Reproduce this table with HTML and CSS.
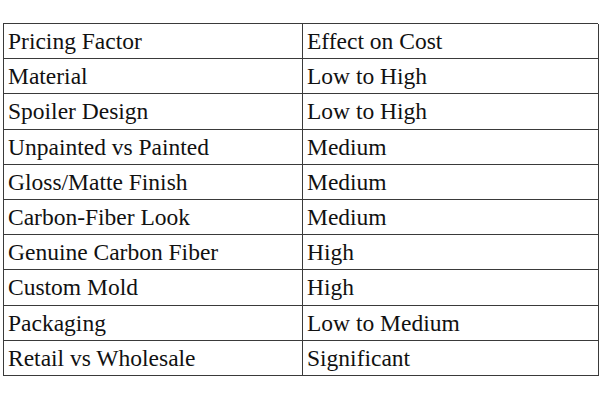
FILE: index.html
```html
<!DOCTYPE html>
<html>
<head>
<meta charset="utf-8">
<link rel="stylesheet" href="styles.css">
</head>
<body>
<div class="pricing">
  <p class="cell">Pricing Factor</p><p class="cell">Effect on Cost</p>
  <p class="cell">Material</p><p class="cell">Low to High</p>
  <p class="cell">Spoiler Design</p><p class="cell">Low to High</p>
  <p class="cell">Unpainted vs Painted</p><p class="cell">Medium</p>
  <p class="cell">Gloss/Matte Finish</p><p class="cell">Medium</p>
  <p class="cell">Carbon-Fiber Look</p><p class="cell">Medium</p>
  <p class="cell">Genuine Carbon Fiber</p><p class="cell">High</p>
  <p class="cell">Custom Mold</p><p class="cell">High</p>
  <p class="cell">Packaging</p><p class="cell">Low to Medium</p>
  <p class="cell">Retail vs Wholesale</p><p class="cell">Significant</p>
</div>
</body>
</html>
```
FILE: styles.css
```css
html, body {
  margin: 0;
  padding: 0;
  background: #ffffff;
}
body {
  width: 600px;
  height: 400px;
  overflow: hidden;
}
.pricing {
  margin: 23px 0 0 3px;
  width: 595px;
  display: grid;
  grid-template-columns: 299px 296px;
  grid-auto-rows: 35.2px;
  border-top: 1px solid #3a3a3a;
  border-left: 1px solid #3a3a3a;
  box-sizing: border-box;
  color: #111111;
}
.cell {
  margin: 0;
  font-family: serif;
  font-size: 23.5px;
  border-right: 1px solid #3a3a3a;
  border-bottom: 1px solid #3a3a3a;
  padding: 2px 4px 0 4px;
  line-height: 31px;
}
```
